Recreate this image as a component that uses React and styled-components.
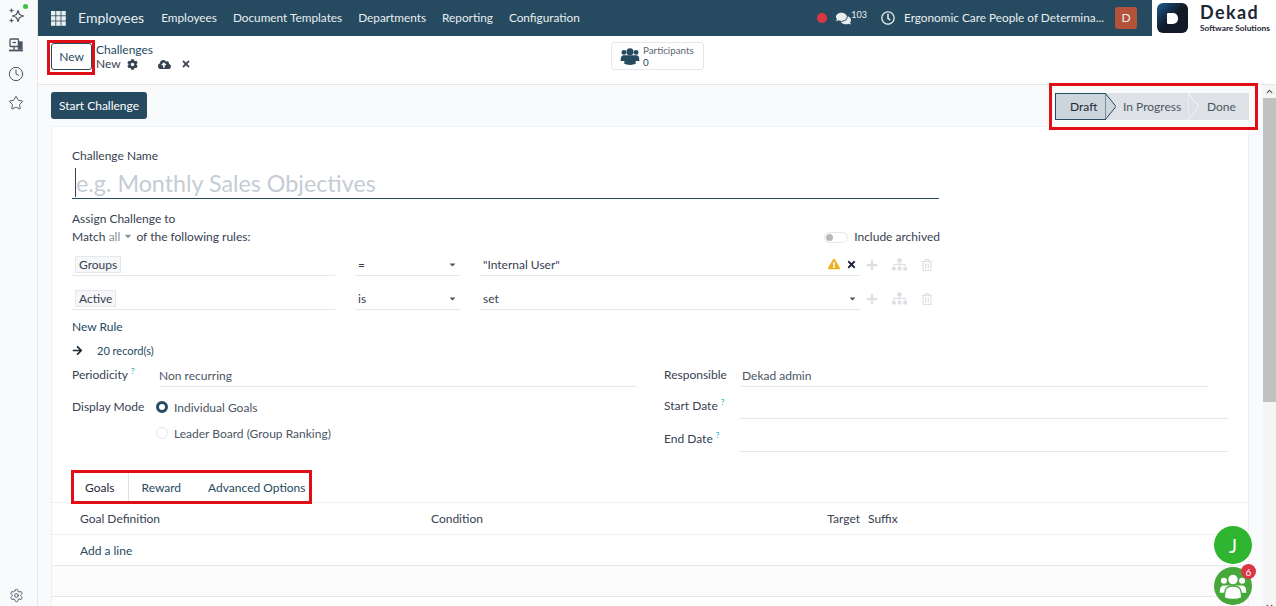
import React from 'react'
import styled, { createGlobalStyle } from 'styled-components'
import { Clock, Star, Settings } from 'lucide-react'
import { FaCog, FaCloudUploadAlt, FaTimes, FaComments, FaExclamationTriangle, FaSitemap, FaRegTrashAlt, FaPlus, FaArrowRight, FaChevronUp, FaChevronDown, FaCaretDown, FaRegClock } from 'react-icons/fa'

const GlobalStyle = createGlobalStyle`
  html, body { margin: 0; padding: 0; height: 100%; overflow: hidden; }
  body {
    font-family: "Lato", "Noto Sans", sans-serif;
    font-size: 12px;
    color: #374151;
    background: #fff;
  }
  * { box-sizing: border-box; }
`

const Page = styled.div`
  display: flex;
  width: 1276px;
  height: 606px;
  overflow: hidden;
  position: relative;
`

const Sidebar = styled.aside`
  width: 38px;
  flex: none;
  background: #f9fafb;
  border-right: 1px solid #e5e7eb;
  display: flex;
  flex-direction: column;
  align-items: center;
  padding: 7px 5px 3px 0;
  gap: 13px;
  color: #4b5563;
  position: relative;
`

const OnlineDot = styled.span`
  position: absolute;
  top: 4px;
  left: 23px;
  width: 5px;
  height: 5px;
  border-radius: 50%;
  background: #3fbf3f;
`

const SideBottom = styled.div`
  margin-top: auto;
  display: flex;
`

const Main = styled.div`
  flex: 1;
  min-width: 0;
  display: flex;
  flex-direction: column;
`

const NavBar = styled.nav`
  height: 36px;
  flex: none;
  background: #264a5f;
  color: #e9eef1;
  display: flex;
  align-items: center;
  padding-left: 13px;
  line-height: 32px;
`

const AppName = styled.span`
  font-size: 14px;
  margin-left: 12px;
  margin-right: 17px;
`

const MenuItem = styled.span`
  font-size: 11.8px;
  margin-right: 16px;
`

const NavRight = styled.div`
  margin-left: auto;
  display: flex;
  align-items: center;
  height: 100%;
`

const RedDot = styled.span`
  width: 10px;
  height: 10px;
  border-radius: 50%;
  background: #dc3545;
  margin-right: 9px;
`

const Counter = styled.sup`
  font-size: 9px;
  line-height: 1;
  margin: -7px 14px 0 0;
`

const CompanyName = styled.span`
  font-size: 11.8px;
  margin-left: 9px;
  margin-right: 11px;
  white-space: nowrap;
`

const Avatar = styled.span`
  width: 22px;
  height: 22px;
  background: #b5533a;
  border-radius: 3px;
  font-size: 12px;
  line-height: 1;
  display: flex;
  align-items: center;
  justify-content: center;
  margin-right: 15px;
`

const LogoBox = styled.div`
  width: 124px;
  height: 36px;
  background: #fff;
  display: flex;
  align-items: center;
  padding-left: 5px;
  color: #1c2733;
`

const LogoMark = styled.div`
  width: 31px;
  height: 30px;
  border-radius: 6px;
  background: linear-gradient(135deg, #1d5a94 0%, #111a26 50%);
  display: flex;
  align-items: center;
  justify-content: center;
  &::after {
    content: '';
    width: 11px;
    height: 11px;
    background: #fff;
    border-radius: 1px 5px 5px 1px;
  }
`

const LogoText = styled.div`
  margin-left: 12px;
  padding-bottom: 2px;
  display: flex;
  flex-direction: column;
`

const LogoTitle = styled.span`
  font-size: 18px;
  font-weight: 700;
  letter-spacing: 1.4px;
  line-height: 21px;
`

const LogoSub = styled.span`
  font-size: 8.3px;
  font-weight: 700;
  line-height: 10px;
  white-space: nowrap;
`

const ControlPanel = styled.div`
  height: 49px;
  flex: none;
  background: #fff;
  border-bottom: 1px solid #e5e7eb;
  display: flex;
  padding: 4px 0 0 9px;
  position: relative;
`

const RedFrame = styled.div`
  border: 3px solid #e00f16;
  display: inline-flex;
  flex: none;
`

const NewFrame = styled(RedFrame)`
  width: 48px;
  height: 35px;
  padding-left: 1px;
`

const NewButton = styled.button`
  width: 42px;
  height: 27px;
  background: #fff;
  border: 1px solid #264a5f;
  border-radius: 3px;
  color: #264a5f;
  font: inherit;
  padding: 0;
`

const Crumbs = styled.div`
  margin-left: 1px;
  margin-top: 3px;
  line-height: 14px;
  color: #264a5f;
`

const CrumbRow = styled.div`
  display: flex;
  align-items: center;
  color: #374151;
`

const CrumbIcon = styled.span`
  display: inline-flex;
  margin-left: ${p => p.$gap}px;
  font-size: ${p => p.$size}px;
  color: #374151;
`

const StatButton = styled.div`
  position: absolute;
  left: 573px;
  top: 6px;
  width: 93px;
  height: 28px;
  border: 1px solid #e5e7eb;
  border-radius: 3px;
  display: flex;
  align-items: center;
  padding-left: 8px;
  gap: 3px;
  color: #264a5f;
`

const StatText = styled.div`
  font-size: 9.8px;
  line-height: 12px;
  color: #5a6672;
`

const StatCount = styled.span`
  color: #264a5f;
`

const ScrollRow = styled.div`
  flex: 1;
  min-height: 0;
  display: flex;
  background: #f9fafb;
`

const Content = styled.div`
  flex: 1;
  min-width: 0;
  padding: 0 14px 0 13px;
`

const Scrollbar = styled.div`
  width: 13px;
  flex: none;
  background: #f5f5f5;
  display: flex;
  flex-direction: column;
  align-items: center;
  padding-top: 3px;
  color: #505050;
  font-size: 7px;
`

const ScrollThumb = styled.div`
  width: 100%;
  height: 304px;
  margin-top: 3px;
  background: #c1c1c1;
`

const ScrollDown = styled.div`
  margin-top: auto;
  margin-bottom: -4px;
  display: flex;
`

const StatusRow = styled.div`
  height: 41px;
  display: flex;
  align-items: flex-start;
  justify-content: space-between;
`

const PrimaryButton = styled.button`
  margin-top: 7px;
  height: 27px;
  width: 96px;
  border: 0;
  border-radius: 3px;
  background: #264a5f;
  color: #fff;
  font: inherit;
  padding: 0;
`

const StatusFrame = styled(RedFrame)`
  margin: -2px -9px 0 0;
  width: 209px;
  height: 47px;
  padding: 7px 6px 0 3px;
  position: relative;
  z-index: 2;
  background: #f9fafb;
`

const StatusBar = styled.div`
  display: flex;
  width: 194px;
  height: 27px;
  background: #dee2e6;
`

const Stage = styled.div`
  position: relative;
  height: 27px;
  width: ${p => p.$width}px;
  flex: none;
  display: flex;
  align-items: center;
  white-space: nowrap;
  padding-left: ${p => p.$pad}px;
  color: ${p => (p.$active ? '#1f2937' : '#4b5563')};
  background: ${p => (p.$active ? '#cdd5dc' : 'transparent')};
  ${p => p.$active && 'border: 1px solid #264a5f; border-right: 0;'}
`

const StageArrow = styled.svg`
  position: absolute;
  left: 100%;
  top: ${p => (p.$active ? '-1px' : '0')};
  width: 11px;
  height: 27px;
  z-index: 1;
`

const Sheet = styled.div`
  background: #fff;
  border: 1px solid #eef0f2;
  border-bottom: 0;
  height: 480px;
  padding-top: 21px;
`

const FormArea = styled.div`
  padding: 0 20px;
`

const FieldLabel = styled.div`
  line-height: 16px;
`

const NameInput = styled.div`
  width: 867px;
  height: 34px;
  border-bottom: 1px solid #264a5f;
  font-size: 23.3px;
  line-height: 36px;
  color: #c5ccd4;
  padding-left: 4px;
  margin-top: 1px;
  position: relative;
  white-space: nowrap;
  &::before {
    content: '';
    position: absolute;
    left: 3px;
    top: 3px;
    width: 1px;
    height: 29px;
    background: #374151;
  }
`

const AssignBlock = styled.div`
  margin-top: 11px;
  width: 868px;
  line-height: 18px;
`

const MatchRow = styled.div`
  display: flex;
  align-items: center;
  justify-content: space-between;
`

const Muted = styled.span`
  color: #8a939c;
`

const ArchivedToggle = styled.div`
  display: flex;
  align-items: center;
  gap: 6px;
`

const ToggleTrack = styled.span`
  width: 24px;
  height: 11px;
  border-radius: 6px;
  border: 1px solid #e5e7eb;
  display: inline-block;
  position: relative;
  &::after {
    content: '';
    position: absolute;
    left: 1px;
    top: 1px;
    width: 7px;
    height: 7px;
    border-radius: 50%;
    background: #b8b8b8;
  }
`

const RuleList = styled.div`
  margin-top: -4px;
`

const RuleRow = styled.div`
  display: grid;
  grid-template-columns: 263px 105px 380px auto;
  column-gap: 20px;
  width: 912px;
  height: 34px;
  align-items: end;
`

const RuleCell = styled.div`
  height: 23px;
  border-bottom: 1px solid #e5e7eb;
  display: flex;
  align-items: center;
  justify-content: space-between;
  padding: 0 3px;
`

const Tag = styled.span`
  background: #f6f7f8;
  border: 1px solid #e5e7eb;
  padding: 0 3px;
  line-height: 15px;
`

const CellEnd = styled.span`
  display: flex;
  align-items: center;
  gap: 6px;
  color: #1f2937;
`

const WarnIcon = styled(FaExclamationTriangle)`
  color: #f0ad1e;
`

const RuleActions = styled.div`
  display: flex;
  align-items: center;
  height: 23px;
  margin-left: -14px;
  color: #dcdfe3;
  gap: 14px;
`

const NewRule = styled.div`
  color: #264a5f;
  margin-top: 9px;
  line-height: 16px;
`

const RecordRow = styled.div`
  display: flex;
  align-items: center;
  margin-top: 7px;
  height: 16px;
  color: #264a5f;
  font-size: 11px;
  gap: 14px;
`

const ArrowIcon = styled.span`
  display: inline-flex;
  color: #1f2937;
  font-size: 11px;
`

const GroupGrid = styled.div`
  display: grid;
  grid-template-columns: 565px 564px;
  column-gap: 27px;
  margin-top: 5px;
`

const GroupCol = styled.div`
  display: flex;
  flex-direction: column;
`

const FormRow = styled.div`
  display: grid;
  grid-template-columns: ${p => p.$label}px 1fr;
  min-height: ${p => p.$height}px;
  align-items: ${p => p.$align || 'end'};
  margin-right: ${p => p.$inset || 0}px;
  margin-top: ${p => p.$top || 0}px;
`

const Help = styled.sup`
  color: #17a2b8;
  font-size: 8px;
  margin-left: 3px;
  line-height: 0;
`

const RowLabel = styled.div`
  line-height: 16px;
  align-self: start;
  padding-top: ${p => p.$top}px;
`

const ValueLine = styled.div`
  height: 23px;
  border-bottom: 1px solid #e5e7eb;
  padding-left: ${p => p.$pad || 0}px;
  line-height: 24px;
  color: #4b5563;
`

const Radios = styled.div`
  display: flex;
  flex-direction: column;
`

const RadioRow = styled.div`
  display: flex;
  align-items: center;
  gap: 6px;
  height: 26px;
  color: #4b5563;
`

const RadioDot = styled.span`
  width: 12px;
  height: 12px;
  border-radius: 50%;
  background: ${p => (p.$on ? '#fff' : 'transparent')};
  border: ${p => (p.$on ? '3.5px solid #264a5f' : '1px solid #e5e7eb')};
`

const TabBar = styled.div`
  margin-top: 18px;
  height: 33px;
  padding-left: 19px;
  border-bottom: 1px solid #eef0f2;
  position: relative;
`

const TabFrame = styled(RedFrame)`
  width: 241px;
  height: 34px;
  position: relative;
  z-index: 1;
`

const Tab = styled.div`
  height: 100%;
  display: flex;
  align-items: center;
  white-space: nowrap;
  padding: 0 ${p => p.$right}px 0 ${p => p.$left}px;
  color: ${p => (p.$active ? '#1f2937' : '#264a5f')};
  ${p => p.$active && 'border-right: 1px solid #dee2e6;'}
`

const ListRow = styled.div`
  display: grid;
  grid-template-columns: 351px 384px 53px 1fr;
  height: ${p => p.$height}px;
  padding-left: 28px;
  align-items: center;
  border-bottom: 1px solid ${p => p.$line || '#e5e7eb'};
  background: ${p => p.$bg || '#fff'};
  color: #374151;
`

const TargetCell = styled.div`
  text-align: right;
  padding-right: 8px;
`

const AddLine = styled.span`
  color: #264a5f;
`

const FloatingStack = styled.div`
  position: absolute;
  right: 24px;
  top: 526px;
  display: flex;
  flex-direction: column;
  gap: 3px;
  z-index: 3;
`

const ChatBubble = styled.div`
  width: 38px;
  height: 38px;
  border-radius: 50%;
  background: ${p => p.$bg};
  color: #fff;
  display: flex;
  align-items: center;
  justify-content: center;
  font-size: 19px;
  position: relative;
`

const ChatBadge = styled.span`
  position: absolute;
  right: -4px;
  top: -3px;
  width: 15px;
  height: 15px;
  border-radius: 50%;
  background: #dc3545;
  font-size: 10px;
  display: flex;
  align-items: center;
  justify-content: center;
`

const GridIcon = () => (
  <svg width="15" height="15" viewBox="0 0 15 15" fill="#e9eef1">
    {[0, 5.2, 10.4].map(y => [0, 5.2, 10.4].map(x => (
      <rect key={`${x}-${y}`} x={x} y={y} width="4.4" height="4.4" />
    )))}
  </svg>
)

// spark with two small stars on the left, drawn since the packages only have it mirrored
const SparkIcon = () => (
  <svg width="17" height="17" viewBox="0 0 17 17" fill="none" stroke="currentColor" strokeWidth="1.2" strokeLinejoin="round">
    <path d="M10 3.5 L11.5 7.5 L15.5 9 L11.5 10.5 L10 14.5 L8.5 10.5 L4.5 9 L8.5 7.5 Z" />
    <path d="M3.5 1.5 L4 3 L5.5 3.5 L4 4 L3.5 5.5 L3 4 L1.5 3.5 L3 3 Z" fill="currentColor" strokeWidth="0.5" />
    <path d="M3.5 11.5 L4 13 L5.5 13.5 L4 14 L3.5 15.5 L3 14 L1.5 13.5 L3 13 Z" fill="currentColor" strokeWidth="0.5" />
  </svg>
)

const DeskIcon = () => (
  <svg width="16" height="16" viewBox="0 0 16 16" fill="none" stroke="currentColor" strokeWidth="1.3">
    <rect x="2" y="2" width="8.5" height="7.5" rx="0.8" />
    <path d="M4.5 5.5 H8" />
    <rect x="10.5" y="5" width="3.5" height="7" fill="currentColor" />
    <path d="M1 13.5 H15" strokeWidth="1.8" />
    <path d="M6 9.5 V13" />
  </svg>
)

// three people, the middle one in front; the outline is only drawn on the bubble
const GroupIcon = ({ size, fill, outline }) => (
  <svg width={size} height={size} viewBox="0 0 28 28" fill={fill} stroke={outline} strokeWidth={outline ? 1.2 : 0}>
    <circle cx="5.5" cy="9" r="3.4" />
    <circle cx="22.5" cy="9" r="3.4" />
    <path d="M1 20 C1 14 3 13 6 13 H22 C25 13 27 14 27 20 V21 H1 Z" />
    <circle cx="14" cy="8" r="5" />
    <path d="M6 25 C6 16 8 14 14 14 C20 14 22 16 22 25 C18 27 10 27 6 25 Z" />
  </svg>
)

const rules = [
  { field: 'Groups', op: '=', value: '"Internal User"', warn: true },
  { field: 'Active', op: 'is', value: 'set', warn: false },
]

const menu = ['Employees', 'Document Templates', 'Departments', 'Reporting', 'Configuration']

const App = () => (
  <Page>
    <GlobalStyle />
    <Sidebar>
      <OnlineDot />
      <SparkIcon />
      <DeskIcon />
      <Clock size={16} strokeWidth={1.5} />
      <Star size={16} strokeWidth={1.5} />
      <SideBottom>
        <Settings size={15} strokeWidth={1.5} />
      </SideBottom>
    </Sidebar>
    <Main>
      <NavBar>
        <GridIcon />
        <AppName>Employees</AppName>
        {menu.map(item => <MenuItem key={item}>{item}</MenuItem>)}
        <NavRight>
          <RedDot />
          <FaComments size={15} />
          <Counter>103</Counter>
          <FaRegClock size={14} />
          <CompanyName>Ergonomic Care People of Determina...</CompanyName>
          <Avatar>D</Avatar>
          <LogoBox>
            <LogoMark />
            <LogoText>
              <LogoTitle>Dekad</LogoTitle>
              <LogoSub>Software Solutions</LogoSub>
            </LogoText>
          </LogoBox>
        </NavRight>
      </NavBar>
      <ControlPanel>
        <NewFrame><NewButton>New</NewButton></NewFrame>
        <Crumbs>
          <div>Challenges</div>
          <CrumbRow>
            New
            <CrumbIcon $gap={6} $size={11}><FaCog /></CrumbIcon>
            <CrumbIcon $gap={20} $size={13}><FaCloudUploadAlt /></CrumbIcon>
            <CrumbIcon $gap={10} $size={10}><FaTimes /></CrumbIcon>
          </CrumbRow>
        </Crumbs>
        <StatButton>
          <GroupIcon size={20} fill="#264a5f" />
          <StatText>Participants<br /><StatCount>0</StatCount></StatText>
        </StatButton>
      </ControlPanel>
      <ScrollRow>
        <Content>
          <StatusRow>
            <PrimaryButton>Start Challenge</PrimaryButton>
            <StatusFrame>
              <StatusBar>
                <Stage $active $width={50} $pad={14}>
                  Draft
                  <StageArrow $active viewBox="0 0 11 27" preserveAspectRatio="none">
                    <polygon points="0,0 11,13.5 0,27" fill="#cdd5dc" stroke="#264a5f" />
                  </StageArrow>
                </Stage>
                <Stage $width={83} $pad={18}>
                  In Progress
                  <StageArrow viewBox="0 0 11 27" preserveAspectRatio="none">
                    <polygon points="0,0 11,13.5 0,27" fill="#dee2e6" stroke="#f4f5f6" />
                  </StageArrow>
                </Stage>
                <Stage $width={61} $pad={19}>Done</Stage>
              </StatusBar>
            </StatusFrame>
          </StatusRow>
          <Sheet>
            <FormArea>
              <FieldLabel>Challenge Name</FieldLabel>
              <NameInput>e.g. Monthly Sales Objectives</NameInput>
              <AssignBlock>
                <div>Assign Challenge to</div>
                <MatchRow>
                  <span>Match <Muted>all <FaCaretDown size={10} /></Muted> of the following rules:</span>
                  <ArchivedToggle><ToggleTrack />Include archived</ArchivedToggle>
                </MatchRow>
              </AssignBlock>
              <RuleList>
                {rules.map(rule => (
                  <RuleRow key={rule.field}>
                    <RuleCell><Tag>{rule.field}</Tag></RuleCell>
                    <RuleCell>{rule.op}<FaCaretDown size={9} color="#4b5563" /></RuleCell>
                    <RuleCell>
                      {rule.value}
                      {rule.warn
                        ? <CellEnd><WarnIcon size={12} /><FaTimes size={11} /></CellEnd>
                        : <FaCaretDown size={9} color="#4b5563" />}
                    </RuleCell>
                    <RuleActions>
                      <FaPlus size={12} />
                      <FaSitemap size={15} />
                      <FaRegTrashAlt size={12} />
                    </RuleActions>
                  </RuleRow>
                ))}
              </RuleList>
              <NewRule>New Rule</NewRule>
              <RecordRow>
                <ArrowIcon><FaArrowRight /></ArrowIcon>
                20 record(s)
              </RecordRow>
              <GroupGrid>
                <GroupCol>
                  <FormRow $label={87} $height={24}>
                    <RowLabel $top={4}>Periodicity<Help>?</Help></RowLabel>
                    <ValueLine>Non recurring</ValueLine>
                  </FormRow>
                  <FormRow $label={84} $height={52} $align="start" $top={7}>
                    <RowLabel $top={5}>Display Mode</RowLabel>
                    <Radios>
                      <RadioRow><RadioDot $on />Individual Goals</RadioRow>
                      <RadioRow><RadioDot />Leader Board (Group Ranking)</RadioRow>
                    </Radios>
                  </FormRow>
                </GroupCol>
                <GroupCol>
                  <FormRow $label={77} $height={24} $inset={20}>
                    <RowLabel $top={4}>Responsible</RowLabel>
                    <ValueLine $pad={1}>Dekad admin</ValueLine>
                  </FormRow>
                  <FormRow $label={75} $height={32}>
                    <RowLabel $top={11}>Start Date<Help>?</Help></RowLabel>
                    <ValueLine />
                  </FormRow>
                  <FormRow $label={75} $height={33}>
                    <RowLabel $top={12}>End Date<Help>?</Help></RowLabel>
                    <ValueLine />
                  </FormRow>
                </GroupCol>
              </GroupGrid>
            </FormArea>
            <TabBar>
              <TabFrame>
                <Tab $active $left={11} $right={13}>Goals</Tab>
                <Tab $left={13} $right={13}>Reward</Tab>
                <Tab $left={14} $right={0}>Advanced Options</Tab>
              </TabFrame>
            </TabBar>
            <ListRow $height={32} $line="#eef0f2">
              <span>Goal Definition</span>
              <span>Condition</span>
              <TargetCell>Target</TargetCell>
              <span>Suffix</span>
            </ListRow>
            <ListRow $height={31}><AddLine>Add a line</AddLine></ListRow>
            <ListRow $height={31} $bg="#fbfbfb" />
          </Sheet>
        </Content>
        <Scrollbar>
          <FaChevronUp />
          <ScrollThumb />
          <ScrollDown><FaChevronDown /></ScrollDown>
        </Scrollbar>
      </ScrollRow>
    </Main>
    <FloatingStack>
      <ChatBubble $bg="#2fb52f">J</ChatBubble>
      <ChatBubble $bg="#46a83a">
        <GroupIcon size={30} fill="#fff" outline="#46a83a" />
        <ChatBadge>6</ChatBadge>
      </ChatBubble>
    </FloatingStack>
  </Page>
)

export default App
